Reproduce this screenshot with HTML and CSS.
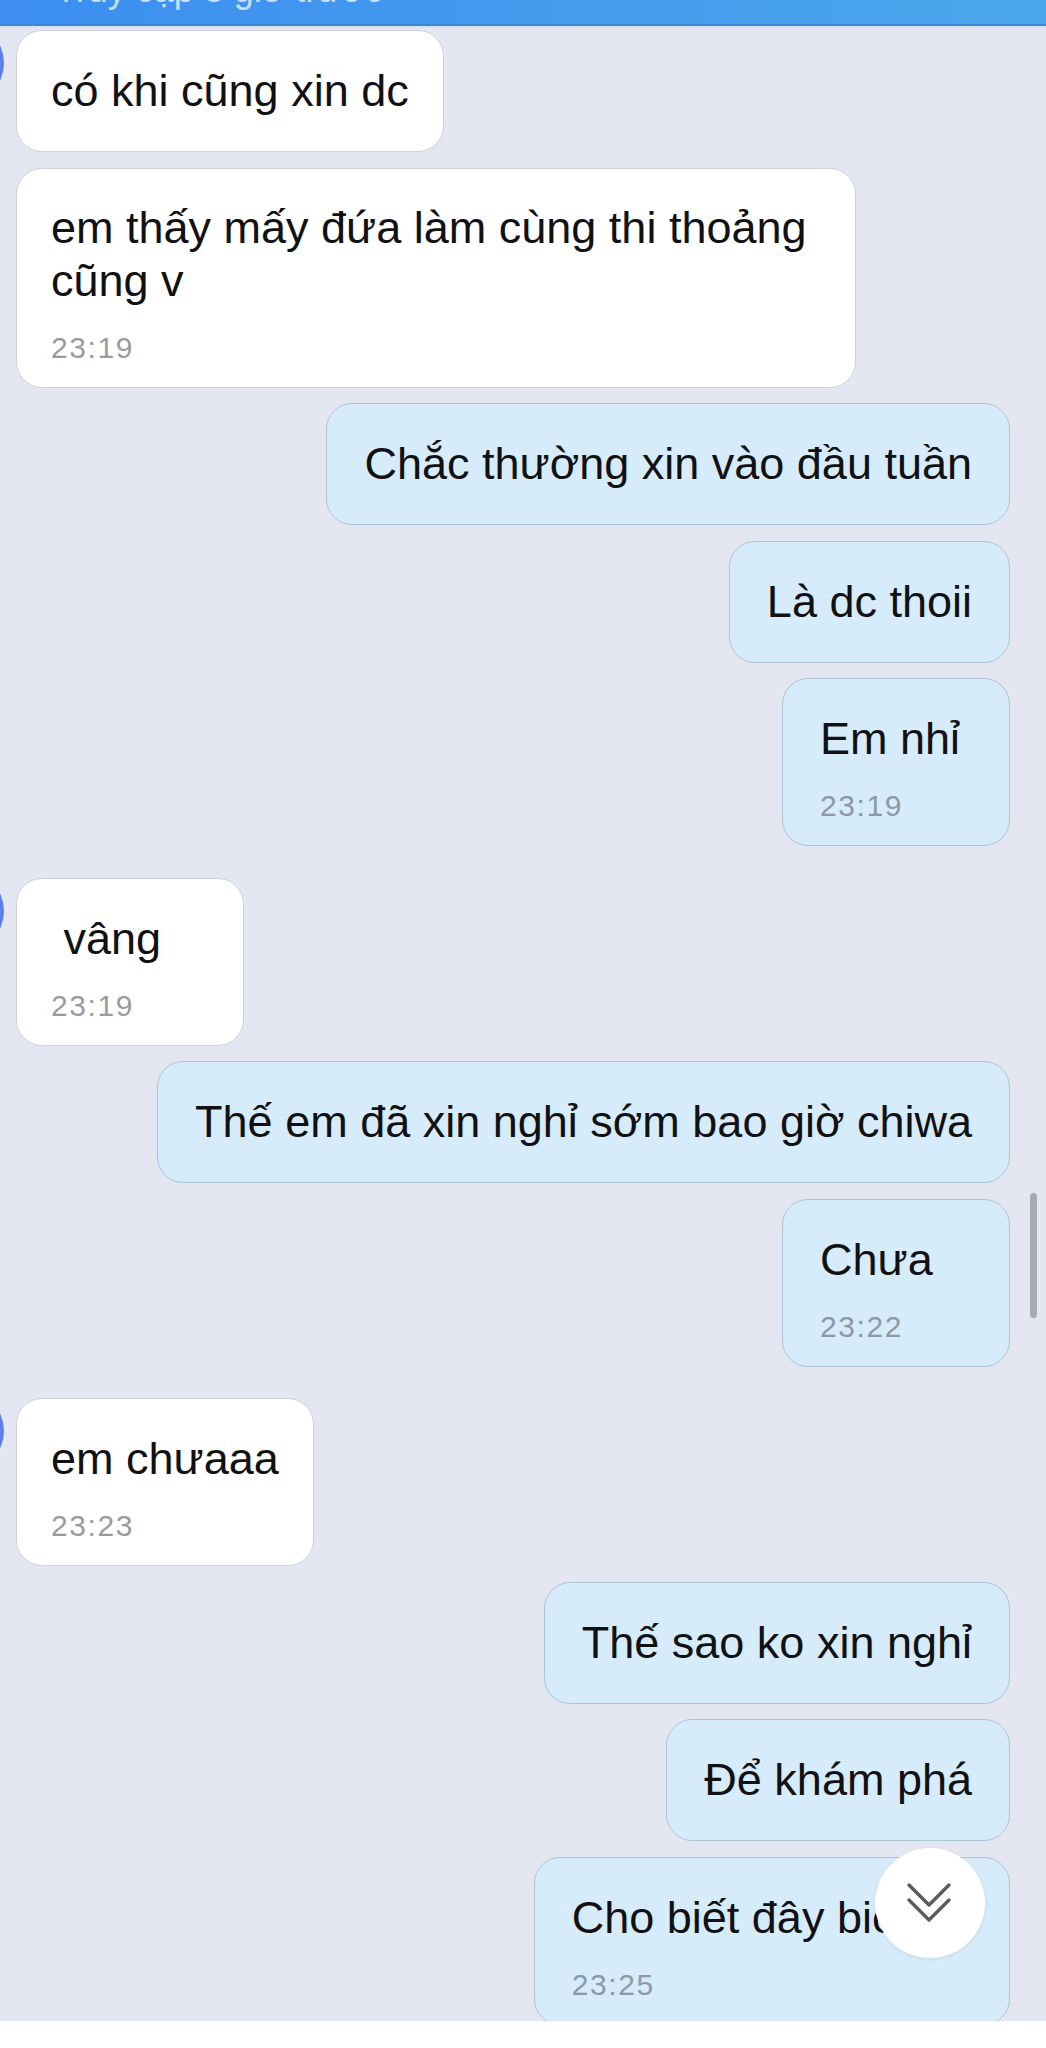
FILE: index.html
```html
<!DOCTYPE html>
<html lang="vi">
<head>
<meta charset="utf-8">
<title>Chat</title>
<link rel="stylesheet" href="styles.css">
</head>
<body>
<div class="screen">
  <header class="topbar"><span class="status">Truy cập 8 giờ trước</span></header>
  <main class="chat">
    <div class="row in">
      <div class="avatar"></div>
      <div class="bubble">có khi cũng xin dc</div>
    </div>
    <div class="row in">
      <div class="bubble timed wrap">em thấy mấy đứa làm cùng thi thoảng cũng v<div class="time">23:19</div></div>
    </div>
    <div class="row out">
      <div class="bubble">Chắc thường xin vào đầu tuần</div>
    </div>
    <div class="row out">
      <div class="bubble">Là dc thoii</div>
    </div>
    <div class="row out">
      <div class="bubble timed">Em nhỉ<div class="time">23:19</div></div>
    </div>
    <div class="row in gap">
      <div class="avatar"></div>
      <div class="bubble timed">&nbsp;vâng<div class="time">23:19</div></div>
    </div>
    <div class="row out">
      <div class="bubble">Thế em đã xin nghỉ sớm bao giờ chiwa</div>
    </div>
    <div class="row out">
      <div class="bubble timed">Chưa<div class="time">23:22</div></div>
    </div>
    <div class="row in gap">
      <div class="avatar"></div>
      <div class="bubble timed">em chưaaa<div class="time">23:23</div></div>
    </div>
    <div class="row out">
      <div class="bubble">Thế sao ko xin nghỉ</div>
    </div>
    <div class="row out">
      <div class="bubble">Để khám phá</div>
    </div>
    <div class="row out">
      <div class="bubble timed">Cho biết đây biết nè<div class="time">23:25</div></div>
    </div>
  </main>
  <footer class="composer"></footer>
  <div class="scrollbar"></div>
  <button class="scroll-down" aria-label="Cuộn xuống">
    <svg viewBox="0 0 48 48" width="48" height="48" fill="none" stroke="#5c5c5e" stroke-width="3.4" stroke-linecap="round" stroke-linejoin="round">
      <path d="M4 6 L24 26 L44 6"/>
      <path d="M4 21 L24 41 L44 21"/>
    </svg>
  </button>
</div>
</body>
</html>
```

FILE: styles.css
```css
* { box-sizing: border-box; }

html, body {
  margin: 0;
  padding: 0;
}

body {
  background: #e4e7f1;
  font-family: "Liberation Sans", Arial, sans-serif;
}

.screen {
  position: relative;
  width: 1046px;
  height: 2048px;
  overflow: hidden;
  display: flex;
  flex-direction: column;
  background: #e4e7f1;
}

.topbar {
  flex: 0 0 auto;
  height: 26px;
  overflow: hidden;
  background: linear-gradient(90deg, #3d8ef0 0%, #4399ee 45%, #4aa8eb 100%);
  border-bottom: 2px solid #3c86d4;
  box-shadow: 0 2px 0 #d3e6f7;
  position: relative;
  z-index: 2;
  padding-left: 55px;
}

.status {
  display: block;
  margin-top: -28px;
  font-size: 36px;
  line-height: 36px;
  color: #c4e0fa;
  white-space: nowrap;
}

.chat {
  flex: 1 1 auto;
  overflow: hidden;
  padding-top: 4px;
  display: flex;
  flex-direction: column;
}

.row {
  display: flex;
  align-items: flex-start;
  flex: 0 0 auto;
}

.row + .row {
  margin-top: 15.5px;
}

.row.gap {
  margin-top: 31.5px;
}

.row.in {
  justify-content: flex-start;
  padding-left: 16px;
}

.row.out {
  justify-content: flex-end;
  padding-right: 36px;
}

.avatar {
  flex: 0 0 80px;
  width: 80px;
  height: 80px;
  margin-left: -92px;
  margin-right: 12px;
  margin-top: -7px;
  border-radius: 50%;
  background: #5a80ea;
}

.bubble {
  flex: 0 1 auto;
  font-size: 45px;
  line-height: 52.5px;
  color: #111114;
  padding-top: 33.75px;
  padding-bottom: 33.75px;
  padding-left: 34px;
  padding-right: 34px;
  border-radius: 26px;
  border: 1px solid #cfd1d9;
  background: #ffffff;
  max-width: 840px;
}

.row.out .bubble {
  background: #d6ecfa;
  border-color: #aec5d3;
  max-width: 880px;
  padding-left: 37px;
  padding-right: 37px;
}

.row .bubble.timed {
  min-width: 228px;
  padding-bottom: 19.4px;
}

.time {
  margin-top: 20.35px;
  font-size: 30px;
  line-height: 40px;
  letter-spacing: 1.6px;
  color: #9b9b9e;
}

.row.out .time {
  color: #8b9aa4;
}

.composer {
  flex: 0 0 27px;
  height: 27px;
  background: #ffffff;
  position: relative;
  z-index: 2;
}

.scrollbar {
  position: absolute;
  left: 1030px;
  top: 1193px;
  width: 7px;
  height: 125px;
  border-radius: 4px;
  background: #a9a9b6;
}

.scroll-down {
  position: absolute;
  left: 875px;
  top: 1848px;
  width: 110px;
  height: 110px;
  border-radius: 50%;
  border: none;
  padding: 0;
  background: #ffffff;
  box-shadow: 0 1px 4px rgba(0, 0, 0, 0.08);
  display: flex;
  align-items: center;
  justify-content: center;
  z-index: 3;
}

.scroll-down svg {
  display: block;
  margin-left: -2px;
}
```
